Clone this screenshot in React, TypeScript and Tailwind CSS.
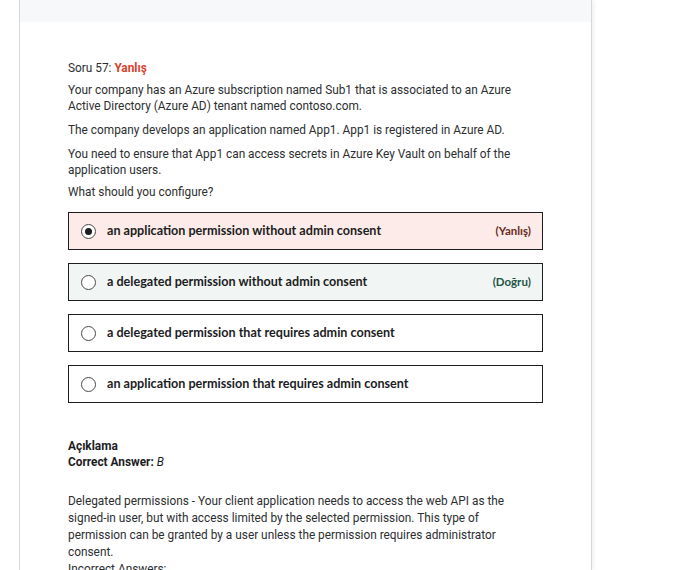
const options = [
  { text: 'an application permission without admin consent', state: 'wrong', selected: true },
  { text: 'a delegated permission without admin consent', state: 'right', selected: false },
  { text: 'a delegated permission that requires admin consent', state: 'none', selected: false },
  { text: 'an application permission that requires admin consent', state: 'none', selected: false },
];

const Radio = ({ checked }: { checked: boolean }) => (
  <span className="w-[15px] h-[15px] rounded-full border-[1.5px] border-[#4a4a4a] flex items-center justify-center shrink-0 bg-white">
    {checked && <span className="w-[7px] h-[7px] rounded-full bg-[#1c1d1f]" />}
  </span>
);

const App = () => {
  return (
    <div className="w-[688px] h-[570px] bg-white overflow-hidden font-['Roboto',sans-serif] text-[#2d2f31]">
      <div className="ml-[19px] w-[573px] h-full border-l border-r border-[#d6d7d9] shadow-[2px_0_4px_rgba(0,0,0,0.06)] bg-white">
        <div className="h-[22px] bg-[#f7f8fa]" />
        <div className="pl-[48px] pr-[46px] pt-[38px] text-[11.85px] leading-[16px]">
          <p>
            Soru 57: <span className="font-bold text-[#d9432f]">Yanlış</span>
          </p>
          <p className="mt-[6px]">
            Your company has an Azure subscription named Sub1 that is associated to an Azure Active Directory (Azure AD) tenant named contoso.com.
          </p>
          <p className="mt-[8px]">The company develops an application named App1. App1 is registered in Azure AD.</p>
          <p className="mt-[8px] pr-[20px]">
            You need to ensure that App1 can access secrets in Azure Key Vault on behalf of the application users.
          </p>
          <p className="mt-[6px]">What should you configure?</p>

          <div className="mt-[12px] w-[475px] flex flex-col gap-[13px]">
            {options.map((o) => (
              <div
                key={o.text}
                className={`h-[38px] border border-[#1c1d1f] flex items-center pl-[12px] pr-[11px] ${
                  o.state === 'wrong' ? 'bg-[#fcebe8]' : o.state === 'right' ? 'bg-[#f1f5f4]' : 'bg-white'
                }`}
              >
                <Radio checked={o.selected} />
                <span className="ml-[11px] font-['Lato',sans-serif] font-bold text-[12.6px] text-[#1c1d1f]">{o.text}</span>
                {o.state === 'wrong' && (
                  <span className="ml-auto font-['Lato',sans-serif] font-bold text-[11.5px] text-[#6b2a1f]">(Yanlış)</span>
                )}
                {o.state === 'right' && (
                  <span className="ml-auto font-['Lato',sans-serif] font-bold text-[11.5px] text-[#1e5449]">(Doğru)</span>
                )}
              </div>
            ))}
          </div>

          <div className="mt-[35px] font-bold text-[#1c1d1f]">
            <p>Açıklama</p>
            <p>
              Correct Answer: <span className="font-normal italic">B</span>
            </p>
          </div>

          <p className="mt-[23px] leading-[17px] pr-[10px]">
            Delegated permissions - Your client application needs to access the web API as the signed-in user, but with access limited by the selected permission. This type of permission can be granted by a user unless the permission requires administrator consent.
          </p>
          <p className="leading-[17px]">Incorrect Answers:</p>
        </div>
      </div>
    </div>
  );
};

export default App;
